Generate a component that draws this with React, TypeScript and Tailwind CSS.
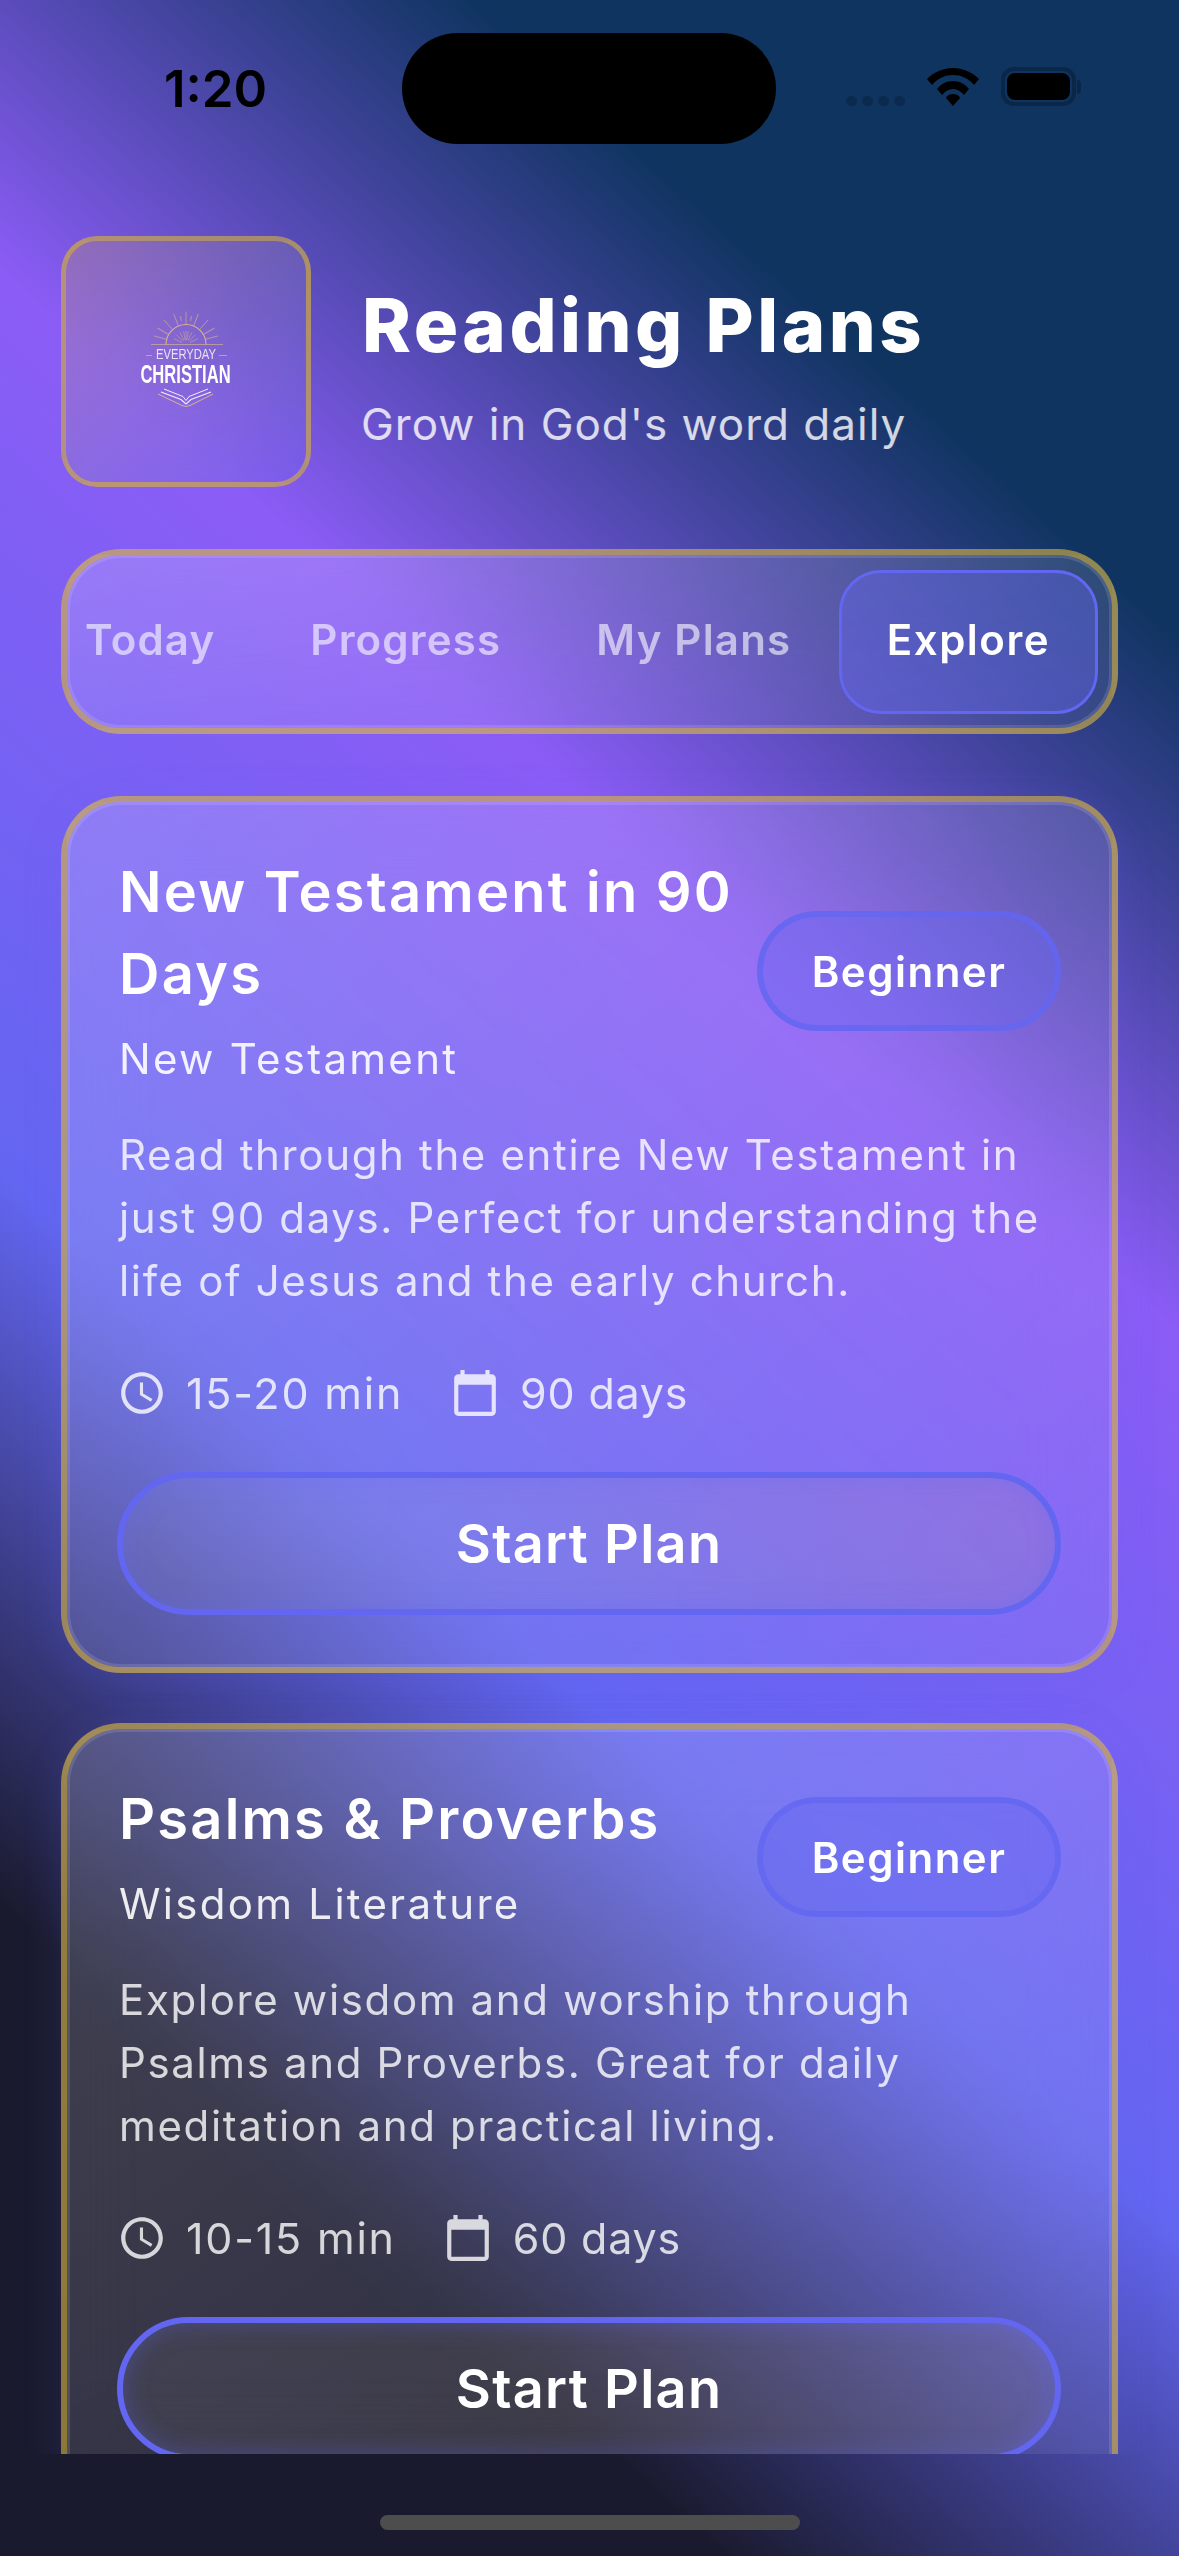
const plans = [
  {
    title: 'New Testament in 90 Days',
    category: 'New Testament',
    description: 'Read through the entire New Testament in just 90 days. Perfect for understanding the life of Jesus and the early church.',
    time: '15-20 min',
    days: '90 days',
  },
  {
    title: 'Psalms & Proverbs',
    category: 'Wisdom Literature',
    description: 'Explore wisdom and worship through Psalms and Proverbs. Great for daily meditation and practical living.',
    time: '10-15 min',
    days: '60 days',
  },
];

const tabs = ['Today', 'Progress', 'My Plans', 'Explore'];

function ClockIcon() {
  return (
    <svg className="h-[50px] w-[50px] shrink-0" viewBox="0 0 24 24" fill="currentColor">
      <path d="M11.99 2C6.47 2 2 6.48 2 12s4.47 10 9.99 10C17.52 22 22 17.52 22 12S17.52 2 11.99 2zM12 20c-4.42 0-8-3.58-8-8s3.58-8 8-8 8 3.58 8 8-3.58 8-8 8z" />
      <path d="M12.5 7H11v6l5.25 3.15.75-1.23-4.5-2.67z" />
    </svg>
  );
}

function CalendarIcon() {
  return (
    <svg className="h-[50px] w-[50px] shrink-0" viewBox="0 0 24 24" fill="currentColor">
      <path d="M20 3h-1V1h-2v2H7V1H5v2H4c-1.1 0-2 .9-2 2v16c0 1.1.9 2 2 2h16c1.1 0 2-.9 2-2V5c0-1.1-.9-2-2-2zm0 18H4V8h16v13z" />
    </svg>
  );
}

function Logo() {
  const longRays = [-75, -60, -42, -22, 0, 22, 42, 60, 75];
  const shortRays = [-11, 11];
  const innerRays = [-64, -44, -26, -10, 0, 10, 26, 44, 64];
  return (
    <svg className="h-[160px] w-[120px]" viewBox="0 0 120 160">
      <g stroke="#d8b58c" fill="none">
        <path d="M40 62.500a20 20 0 0 1 40 0" strokeWidth="1.100" />
        <path d="M25 62.500h45M70 62.500h27" strokeWidth="1.100" opacity="0.65" />
        {longRays.map((r) => (
          <path key={r} d="M60 42v-12.500" strokeWidth="0.900" opacity="0.65" transform={`rotate(${r} 60 62.500)`} />
        ))}
        {shortRays.map((r) => (
          <path key={r} d="M60 38.500v-5" strokeWidth="0.900" opacity="0.65" transform={`rotate(${r} 60 62.500)`} />
        ))}
        {innerRays.map((r) => (
          <path key={r} d="M60 58v-9" strokeWidth="0.700" opacity="0.65" transform={`rotate(${r} 60 62.500)`} />
        ))}
      </g>
      <path d="M20 73.500h6M93 73.500h8" stroke="#ffffff" strokeWidth="0.800" opacity="0.45" />
      <text
        transform="translate(60 77) scale(0.8 1)"
        textAnchor="middle"
        fill="#e9e2f7"
        fontFamily="'Liberation Sans', sans-serif"
        fontSize="14"
      >
        EVERYDAY
      </text>
      <text
        transform="translate(59.500 100.800) scale(0.65 1)"
        textAnchor="middle"
        fill="#ffffff"
        fontFamily="'Liberation Sans', sans-serif"
        fontWeight="700"
        fontSize="25.500"
      >
        CHRISTIAN
      </text>
      <g fill="none">
        <path d="M32 112l24 11.500q4 2 8 0L87 112" stroke="#d8b58c" strokeWidth="1" />
        <path d="M35 110l20 7.500 5 4.500 5-4.500 20-7.500" stroke="#f2ecfb" strokeWidth="1.100" />
        <path d="M38 107l19 7.500 3 4 3-4 19-7.500" stroke="#f2ecfb" strokeWidth="1" />
      </g>
    </svg>
  );
}

function StatusBar() {
  return (
    <div className="relative flex h-[236px] shrink-0 items-start justify-between pt-[59px] pl-[164px] pr-[98px]">
      <span className="text-[51px] leading-[60px] font-semibold text-black">1:20</span>
      <div className="absolute top-[33px] left-[402px] h-[111px] w-[374px] rounded-full bg-black" />
      <div className="flex items-center gap-[22px] pt-[8px]">
        <div className="mt-[28px] flex gap-[5px] opacity-70">
          <span className="h-[10px] w-[11px] rounded-full bg-[#0b2748]" />
          <span className="h-[10px] w-[11px] rounded-full bg-[#0b2748]" />
          <span className="h-[10px] w-[11px] rounded-full bg-[#0b2748]" />
          <span className="h-[10px] w-[11px] rounded-full bg-[#0b2748]" />
        </div>
        <svg className="h-[38px] w-[52px]" viewBox="0 0 52 38" fill="#000">
          <path d="M26 0C16 0 7 4 0 11l5 6C11 10 18 7 26 7s15 3 21 10l5-6C45 4 36 0 26 0z" />
          <path d="M26 13c-7 0-12 3-16 8l5 6c3-4 7-6 11-6s8 2 11 6l5-6c-4-5-9-8-16-8z" />
          <path d="M26 26c-3 0-6 1-7 4l7 8 7-8c-1-3-4-4-7-4z" />
        </svg>
        <div className="flex items-center">
          <div className="h-[39px] w-[75px] rounded-[13px] border-[4px] border-[#0b2748] p-[2px]">
            <div className="h-full w-full rounded-[8px] bg-black" />
          </div>
          <div className="ml-[1px] h-[14px] w-[4px] rounded-r-full bg-[#0b2748]" />
        </div>
      </div>
    </div>
  );
}

function PlanCard({ plan }: { plan: (typeof plans)[number] }) {
  return (
    <div className="mb-[50px] rounded-[60px] border-[6px] border-[#d4af37]/60 bg-linear-to-br from-white/[0.18] to-white/[0.06] pt-[49px] pr-[51px] pb-[52px] pl-[50px] shadow-[inset_0_0_0_3px_rgba(255,255,255,0.12),0_8px_40px_rgba(99,102,241,0.15)] backdrop-blur-[40px]">
      <div className="flex items-center justify-between gap-[24px] pl-[2px]">
        <div className="min-w-0 flex-1">
          <h2 className="text-[56px] leading-[82px] font-semibold tracking-[2.200px] text-white">{plan.title}</h2>
          <p className="mt-[12px] text-[42px] leading-[64px] tracking-[2.300px] text-white/90">{plan.category}</p>
        </div>
        <span className="flex h-[120px] w-[304px] shrink-0 items-center justify-center rounded-full border-[6px] border-[#6366f1]/80 bg-[#6366f1]/40 text-[42px] font-semibold tracking-[1.500px] text-white">
          Beginner
        </span>
      </div>
      <p className="mt-[32px] pl-[2px] text-[42px] leading-[63px] tracking-[1.650px] text-white/80">{plan.description}</p>
      <div className="mt-[51px] flex items-center pl-[2px] text-[43px] leading-[60px] text-white/80">
        <span className="-ml-[2px]"><ClockIcon /></span>
        <span className="ml-[19px] tracking-[1.800px]">{plan.time}</span>
        <span className="ml-[47px]"><CalendarIcon /></span>
        <span className="ml-[20px] tracking-[0.800px]">{plan.days}</span>
      </div>
      <button className="mt-[49px] flex h-[143px] w-full items-center justify-center rounded-full border-[6px] border-[#6366f1] bg-linear-to-r from-white/[0.05] to-[#d4af37]/10 text-[54px] font-semibold tracking-[1.300px] text-white shadow-[inset_0_0_24px_rgba(99,102,241,0.35)]">
        Start Plan
      </button>
    </div>
  );
}

export default function App() {
  return (
    <div className="relative flex h-[2556px] w-[1179px] flex-col overflow-hidden bg-[linear-gradient(222deg,#0f3460_0%,#0f3460_17.500%,#8b5cf6_36.800%,#6366f1_61.700%,#1a1a2e_82%,#1a1a2e_100%)] font-['Inter',sans-serif]">
      <StatusBar />

      <div className="h-[2218px] shrink-0 overflow-hidden px-[61px]">
        <div className="flex h-[251px] items-center gap-[51px]">
          <div className="flex h-[251px] w-[250px] shrink-0 items-center justify-center rounded-[36px] border-[5px] border-[#d4af37]/60 bg-linear-to-br from-[#d4af37]/25 to-[#6366f1]/20 backdrop-blur-[40px]">
            <Logo />
          </div>
          <div className="pt-[10px]">
            <h1 className="text-[74px] leading-[90px] font-extrabold tracking-[3.500px] text-white">Reading Plans</h1>
            <p className="mt-[24px] -ml-[1px] text-[44px] leading-[60px] tracking-[1px] text-white/80">Grow in God's word daily</p>
          </div>
        </div>

        {/* Tabs */}
        <div className="mt-[62px] flex h-[185px] items-center justify-end overflow-hidden rounded-[60px] border-[6px] border-[#d4af37]/60 bg-linear-to-br from-white/[0.18] to-white/[0.06] pr-[14px] shadow-[inset_0_0_0_3px_rgba(255,255,255,0.12)] backdrop-blur-[40px]">
          {tabs.map((tab) => (
            <div
              key={tab}
              className={
                tab === 'Explore'
                  ? 'flex h-[144px] shrink-0 items-center rounded-[42px] border-[3px] border-[#6366f1] bg-[#6366f1]/40 px-[45px] pb-[5px] text-[42px] font-semibold tracking-[1.500px] text-white'
                  : 'flex h-[144px] shrink-0 items-center px-[47.500px] pb-[5px] text-[42px] font-semibold tracking-[1.200px] text-white/60'
              }
            >
              {tab}
            </div>
          ))}
        </div>

        <div className="mt-[62px]">
          {plans.map((plan) => (
            <PlanCard key={plan.title} plan={plan} />
          ))}
        </div>
      </div>

      <div className="flex flex-1 justify-center pt-[61px]">
        <div className="h-[15px] w-[420px] rounded-full bg-[#4d4d4d]" />
      </div>
    </div>
  );
}
